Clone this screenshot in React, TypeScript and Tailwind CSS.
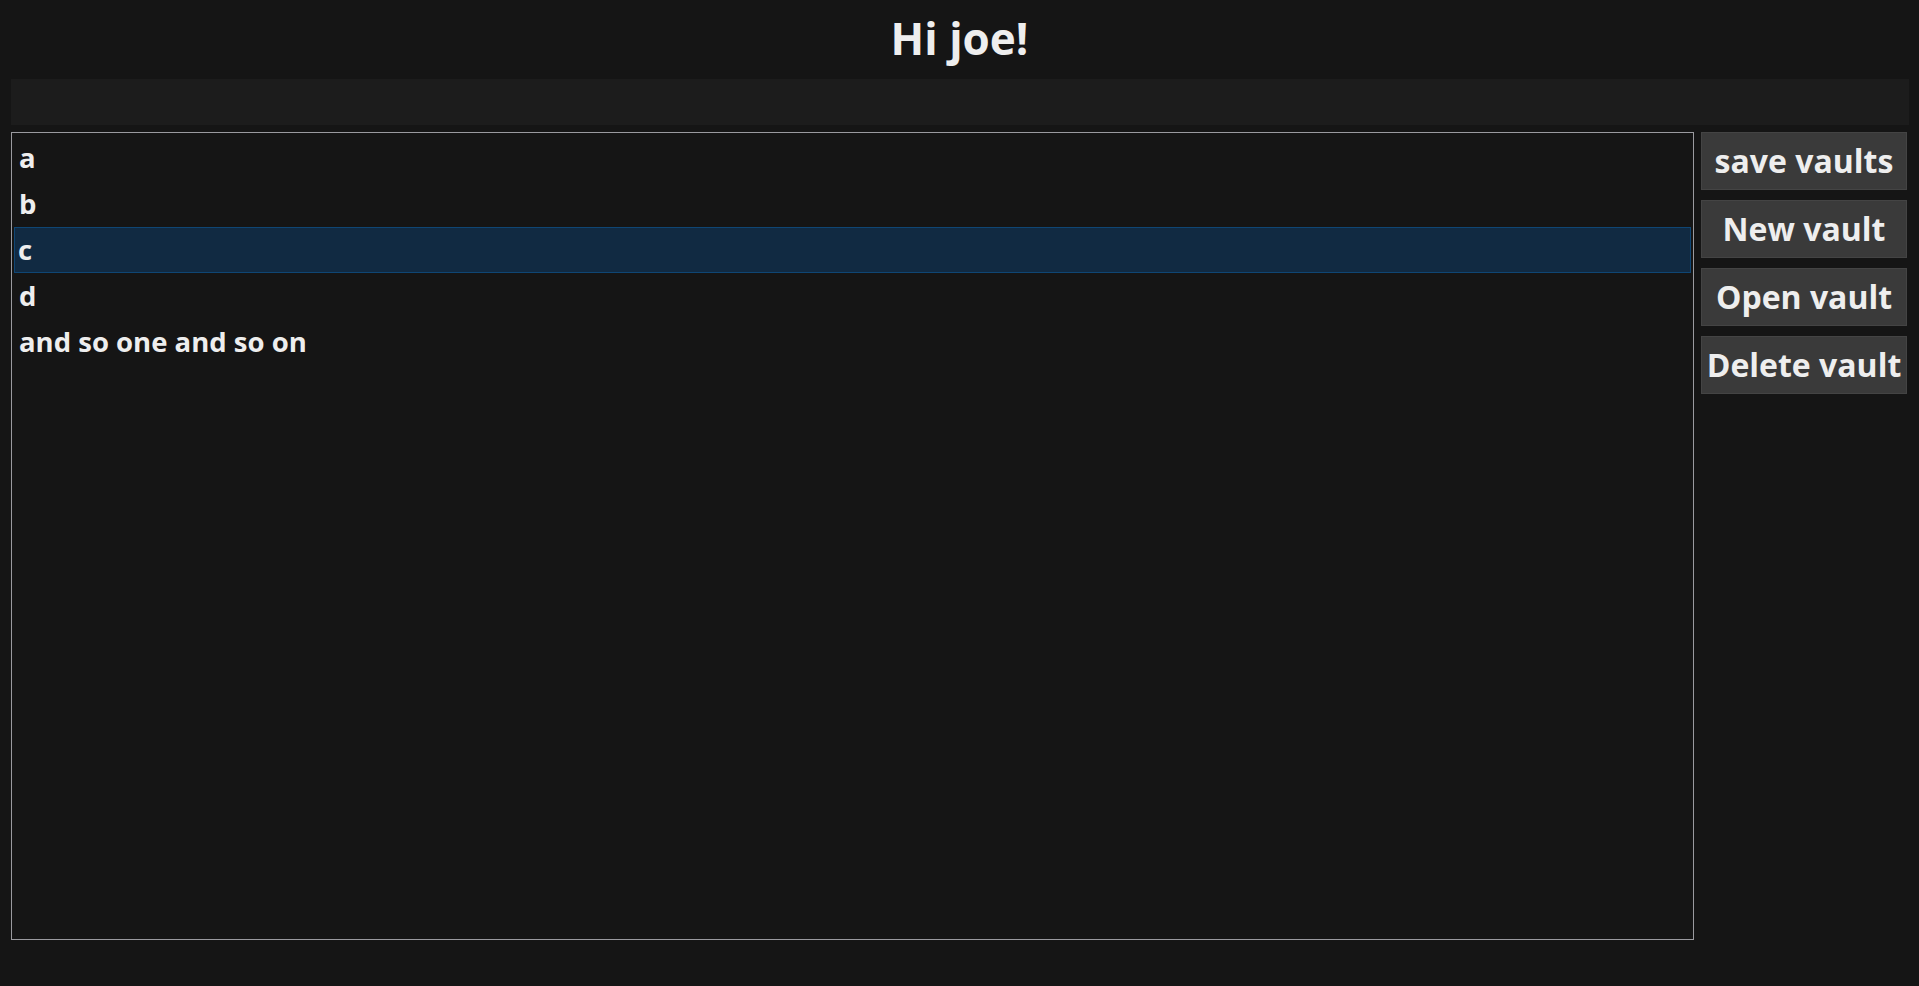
import React from "react";

const items = ["a", "b", "c", "d", "and so one and so on"];
const actions = ["save vaults", "New vault", "Open vault", "Delete vault"];

const App: React.FC = () => {
    const selected = 2;

    return (
        <div className="min-h-screen w-full bg-[#151515] text-[#eeeeee] font-['Open_Sans',sans-serif]">
            <header className="h-[79px] flex items-center justify-center">
                <h1 className="text-[44px] font-bold leading-none pb-1">Hi joe!</h1>
            </header>
            <div className="mx-[11px] mr-[10px] h-[46px] bg-[#1c1c1c]" />
            <div className="flex flex-row gap-[7px] pl-[11px] pr-[12px] pt-[7px]">
                <div className="flex-1 h-[808px] border border-[#9a9a9f] p-[2px] flex flex-col">
                    {items.map((item, i) => (
                        <div
                            key={item}
                            className={
                                i === selected
                                    ? "h-[46px] flex items-center pl-[3px] text-[27.5px] font-bold bg-[#112a42] border border-[#0f4674]"
                                    : "h-[46px] flex items-center pl-[4px] text-[27.5px] font-bold border border-transparent"
                            }
                        >
                            {item}
                        </div>
                    ))}
                </div>
                <div className="w-[206px] flex flex-col gap-[10px]">
                    {actions.map((label) => (
                        <button
                            key={label}
                            className="h-[58px] w-full px-0 bg-[#3a3a3a] border border-[#444444] text-[32px] font-bold text-[#eeeeee] whitespace-nowrap"
                        >
                            {label}
                        </button>
                    ))}
                </div>
            </div>
        </div>
    );
};

export default App;
